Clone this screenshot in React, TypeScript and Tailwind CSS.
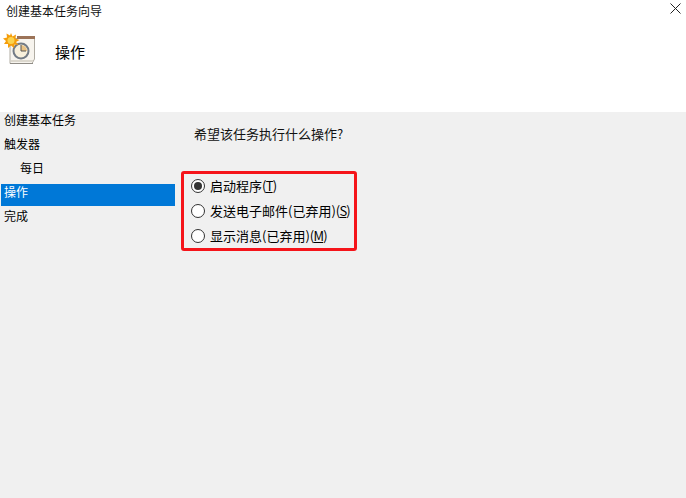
const cjk = 'font-["Noto_Sans_CJK_SC","Liberation_Sans",sans-serif]';

function TaskIcon() {
  return (
    <svg width="34" height="34" viewBox="0 0 34 34" className="block">
      <path d="M7 5.500H31.500V26L29 30.500H7Z" fill="#f7f4ee" stroke="#b0aca3" />
      <rect x="14" y="3" width="18" height="3" fill="#9c7358" />
      <path d="M8 27H30V29H8Z" fill="#dcd8ce" />
      <path d="M7 30H30V31H7Z" fill="#8f8c86" />
      <circle cx="18" cy="18" r="7.500" fill="#f8f0dc" stroke="#737b85" strokeWidth="2" />
      <path d="M18 18V12A6 6 0 0 1 24 18Z" fill="#e9c284" />
      <path d="M18 12v6h5" fill="none" stroke="#555" strokeWidth="1" />
      <path
        d="M8 0l1.500 3.500 3.500-2-.5 4 4 1.500-3.500 2 2.500 3-4-.5-.5 3.500-3-2.500-3 2.500 0-4-4 0 2-3-3-2.500 4-1-.5-4 3.500 2z"
        fill="#f59e0b"
      />
      <circle cx="8" cy="7.500" r="3.500" fill="#fcd34d" />
    </svg>
  );
}

function Radio({ checked }: { checked?: boolean }) {
  return (
    <span className="w-[14px] h-[14px] rounded-full border border-[#333] bg-white flex items-center justify-center shrink-0">
      {checked && <span className="w-[8px] h-[8px] rounded-full bg-[#333]" />}
    </span>
  );
}

function Option({ label, hotkey, checked }: { label: string; hotkey: string; checked?: boolean }) {
  return (
    <div className="h-[25px] flex items-center gap-[5px]">
      <Radio checked={checked} />
      <span className="text-[13px] leading-[18px] text-black whitespace-nowrap">
        {label}
        <span className="tracking-[-0.8px]">
          (<span className="underline">{hotkey}</span>)
        </span>
      </span>
    </div>
  );
}

export default function App() {
  const steps = [
    { name: '创建基本任务' },
    { name: '触发器' },
    { name: '每日', indent: true },
    { name: '操作', active: true },
    { name: '完成' },
  ];

  return (
    <div className={`w-[686px] h-[498px] flex flex-col bg-[#f0f0f0] overflow-hidden ${cjk}`}>
      {/* 标题栏和页头 */}
      <header className="h-[112px] bg-white shrink-0 flex flex-col">
        <div className="h-[22px] flex items-center justify-between pl-[6px] pr-[4px]">
          <span className="text-[12px] leading-[16px] text-[#111]">创建基本任务向导</span>
          <svg width="11" height="11" viewBox="0 0 11 11" className="mr-[1px] mt-[-6px]">
            <path d="M0.500 0.500l10 10M10.500 0.500l-10 10" stroke="#222" strokeWidth="1" />
          </svg>
        </div>
        <div className="flex items-center mt-[11px] pl-[3px]">
          <TaskIcon />
          <span className="ml-[18px] mt-[4px] text-[15px] leading-[20px] text-black">操作</span>
        </div>
      </header>

      <div className="flex-1 flex">
        {/* 左侧步骤 */}
        <nav className="w-[175px] shrink-0 pl-px flex flex-col">
          {steps.map((s) => (
            <div
              key={s.name}
              className={`h-[22px] mb-[2px] flex items-start text-[12px] leading-[16px] ${s.indent ? 'pl-[19px]' : 'pl-[3px]'} ${s.active ? 'bg-[#0078d7] text-white' : 'text-black'}`}
            >
              {s.name}
            </div>
          ))}
        </nav>

        {/* 右侧内容 */}
        <main className="pl-[6px] pt-[13px]">
          <p className="pl-[13px] text-[13px] leading-[17px] text-[#111]">希望该任务执行什么操作?</p>
          <div className="mt-[29px] w-[176px] h-[80px] border-[3px] border-[#f5141a] rounded-[3px] pl-[7px] flex flex-col">
            <Option label="启动程序" hotkey="T" checked />
            <Option label="发送电子邮件(已弃用)" hotkey="S" />
            <Option label="显示消息(已弃用)" hotkey="M" />
          </div>
        </main>
      </div>
    </div>
  );
}
